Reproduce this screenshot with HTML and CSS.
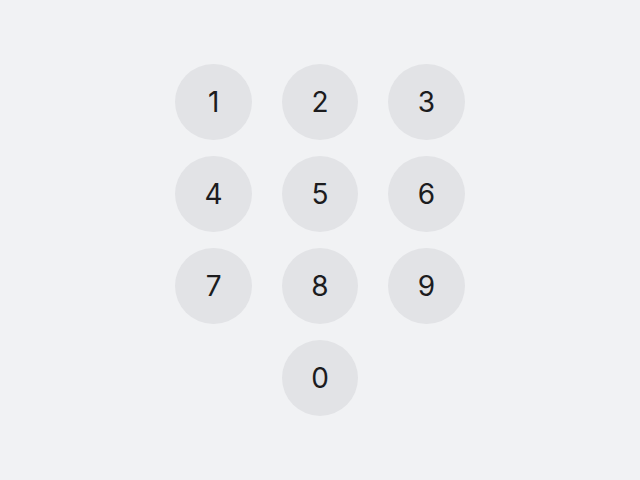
FILE: index.html
```html
<!DOCTYPE html>
<html>
<head>
<meta charset="utf-8">
<link rel="stylesheet" href="styles.css">
</head>
<body>
<div class="pad">
  <button class="key">1</button>
  <button class="key">2</button>
  <button class="key">3</button>
  <button class="key">4</button>
  <button class="key">5</button>
  <button class="key">6</button>
  <button class="key">7</button>
  <button class="key">8</button>
  <button class="key">9</button>
  <button class="key zero">0</button>
</div>
</body>
</html>
```
FILE: styles.css
```css
html, body {
  margin: 0;
  height: 100%;
  background: #f1f2f4;
}
body {
  display: flex;
  align-items: center;
  justify-content: center;
}
.pad {
  display: grid;
  grid-template-columns: repeat(3, 76.8px);
  grid-auto-rows: 76.8px;
  column-gap: 29.6px;
  row-gap: 15.2px;
}
.key {
  border: none;
  padding: 0;
  margin: 0;
  border-radius: 50%;
  background: #e2e3e6;
  color: #1c1c1e;
  font-family: Inter, sans-serif;
  font-size: 28px;
  font-weight: 400;
  display: flex;
  align-items: center;
  justify-content: center;
}
.zero {
  grid-column: 2;
}
```
